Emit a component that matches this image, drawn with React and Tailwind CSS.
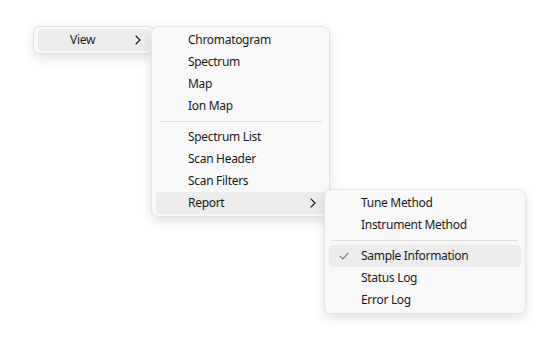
import React from "react";

const Chevron = () => (
  <svg width="6" height="10" viewBox="0 0 6 10" fill="none" className="shrink-0">
    <path d="M1 1l4 4-4 4" stroke="#1f1f1f" strokeWidth="1.1" strokeLinecap="round" strokeLinejoin="round" />
  </svg>
);

const Check = () => (
  <svg width="10" height="8" viewBox="0 0 10 8" fill="none">
    <path d="M1 4.2l2.8 2.8L9 1.2" stroke="#3a3a3a" strokeWidth="1" strokeLinecap="round" strokeLinejoin="round" />
  </svg>
);

function Item({ label, active, sub, checked }) {
  return (
    <div className={`relative flex h-[22px] items-center rounded-[4px] pl-[32px] pr-[9px] ${active ? "bg-[#ececec]" : ""}`}>
      {checked && (
        <span className="absolute left-[10px] top-[7px]">
          <Check />
        </span>
      )}
      <span className="flex-1 leading-none tracking-[-0.3px]">{label}</span>
      {sub && <Chevron />}
    </div>
  );
}

const Sep = () => (
  <div className="flex h-[9px] items-center px-[3px]">
    <div className="h-px w-full bg-[#dcdcdc]" />
  </div>
);

const menuCls =
  "absolute rounded-[7px] border border-[#e3e3e3] bg-[#f9f9f9] px-[4px] py-[2px] shadow-[0_4px_12px_rgba(0,0,0,0.12)]";

export default function App() {
  return (
    <div
      className="relative h-[357px] w-[560px] bg-white text-[12px] text-[#1a1a1a]"
      style={{ fontFamily: '"Noto Sans", "Open Sans", sans-serif' }}
    >
      <div className={`${menuCls} left-[33px] top-[26px] w-[122px]`}>
        <Item label="View" active sub />
      </div>
      <div className={`${menuCls} left-[151px] top-[26px] w-[179px]`}>
        <Item label="Chromatogram" />
        <Item label="Spectrum" />
        <Item label="Map" />
        <Item label="Ion Map" />
        <Sep />
        <Item label="Spectrum List" />
        <Item label="Scan Header" />
        <Item label="Scan Filters" />
        <Item label="Report" active sub />
      </div>
      <div className={`${menuCls} left-[324px] top-[189px] w-[202px]`}>
        <Item label="Tune Method" />
        <Item label="Instrument Method" />
        <Sep />
        <Item label="Sample Information" active checked />
        <Item label="Status Log" />
        <Item label="Error Log" />
      </div>
    </div>
  );
}
